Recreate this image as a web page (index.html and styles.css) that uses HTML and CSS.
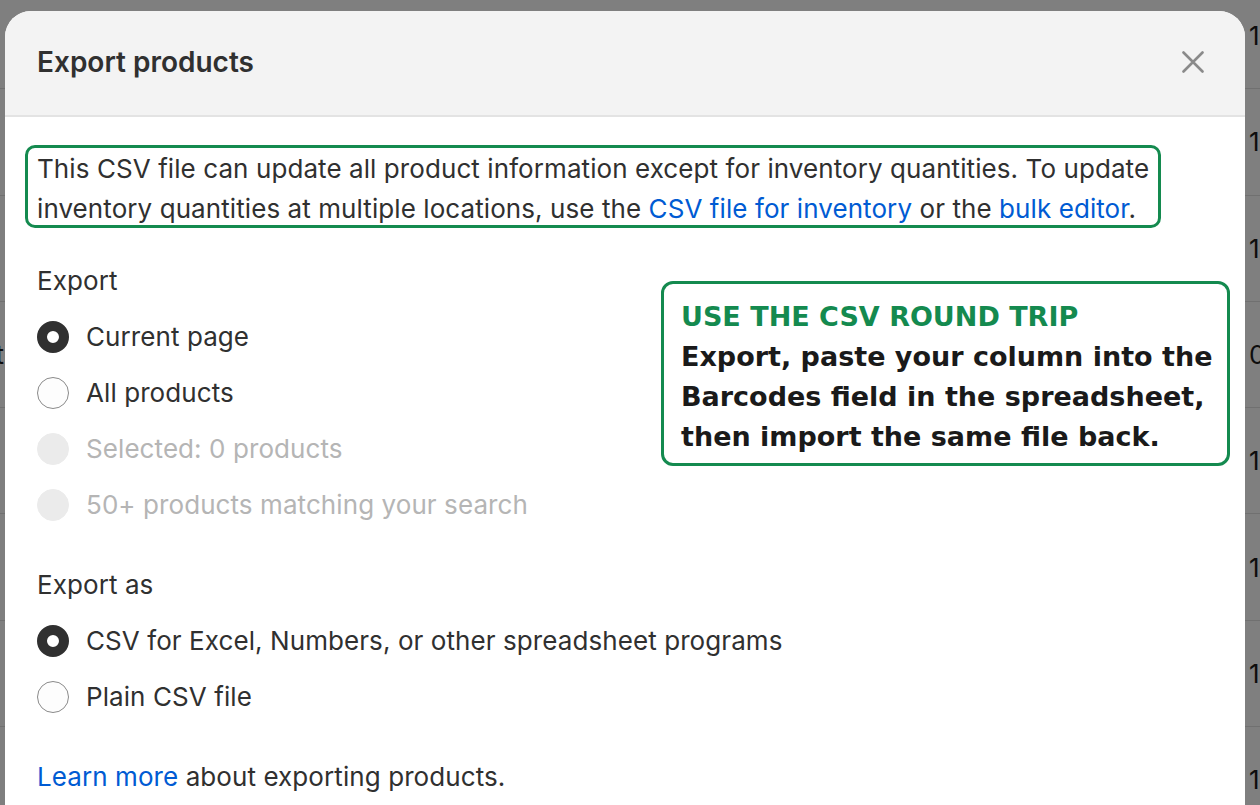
FILE: index.html
```html
<!DOCTYPE html>
<html lang="en">
<head>
<meta charset="utf-8">
<title>Export products</title>
<link rel="stylesheet" href="styles.css">
</head>
<body>
<div class="page">
  <div class="row"><span class="cell-left"></span><span class="cell-right">1</span></div>
  <div class="row"><span class="cell-left"></span><span class="cell-right">1</span></div>
  <div class="row"><span class="cell-left"></span><span class="cell-right">1</span></div>
  <div class="row"><span class="cell-left">Export</span><span class="cell-right">0</span></div>
  <div class="row"><span class="cell-left"></span><span class="cell-right">1</span></div>
  <div class="row"><span class="cell-left"></span><span class="cell-right">1</span></div>
  <div class="row"><span class="cell-left"></span><span class="cell-right">1</span></div>
  <div class="row"><span class="cell-left"></span><span class="cell-right">1</span></div>
</div>
<div class="backdrop"></div>

<div class="modal" role="dialog" aria-labelledby="modal-title">
  <header class="modal-header">
    <h2 id="modal-title" class="modal-title">Export products</h2>
    <button class="close-btn" aria-label="Close">
      <svg width="22" height="22" viewBox="0 0 22 22" aria-hidden="true">
        <path d="M1.5 1.5 L20.5 20.5 M20.5 1.5 L1.5 20.5" stroke="#8a8a8a" stroke-width="2.6" stroke-linecap="round" fill="none"/>
      </svg>
    </button>
  </header>

  <div class="modal-body">
    <p class="intro">This CSV file can update all product information except for inventory quantities. To update inventory quantities at multiple locations, use the <a href="#" class="link">CSV file for inventory</a> or the <a href="#" class="link">bulk editor</a>.</p>

    <fieldset class="group">
      <legend class="group-label">Export</legend>
      <label class="option"><span class="radio checked"></span><span class="option-text">Current page</span></label>
      <label class="option"><span class="radio"></span><span class="option-text">All products</span></label>
      <label class="option disabled"><span class="radio"></span><span class="option-text">Selected: 0 products</span></label>
      <label class="option disabled"><span class="radio"></span><span class="option-text">50+ products matching your search</span></label>
    </fieldset>

    <fieldset class="group">
      <legend class="group-label">Export as</legend>
      <label class="option"><span class="radio checked"></span><span class="option-text">CSV for Excel, Numbers, or other spreadsheet programs</span></label>
      <label class="option"><span class="radio"></span><span class="option-text">Plain CSV file</span></label>
    </fieldset>

    <p class="learn"><a href="#" class="link">Learn more</a> about exporting products.</p>
  </div>

  <div class="note-outline" aria-hidden="true"></div>
  <aside class="note">
    <div class="note-title">USE THE CSV ROUND TRIP</div>
    <div class="note-text">Export, paste your column into the Barcodes field in the spreadsheet, then import the same file back.</div>
  </aside>
</div>
</body>
</html>
```

FILE: styles.css
```css
* { box-sizing: border-box; }

html, body {
  margin: 0;
  padding: 0;
  width: 1260px;
  height: 805px;
  overflow: hidden;
}

body {
  font-family: Inter, "Noto Sans", "Liberation Sans", sans-serif;
  color: #303030;
  background: #ffffff;
  position: relative;
}

/* underlying page */
.page {
  margin-top: -17px;
}

.row {
  height: 106.3px;
  display: grid;
  grid-template-columns: 1249px 1fr;
  align-items: center;
  border-bottom: 1px solid #e0e0e0;
  font-size: 26px;
  color: #1a1a1a;
  white-space: nowrap;
  overflow: hidden;
}

.cell-left {
  overflow: hidden;
  direction: rtl;
  text-align: left;
  width: 4px;
}

.cell-right {
  overflow: hidden;
}

.backdrop {
  position: absolute;
  inset: 0;
  background: rgba(0, 0, 0, 0.5);
}

/* modal */
.modal {
  position: absolute;
  left: 5px;
  top: 11px;
  width: 1240px;
  height: 820px;
  background: #ffffff;
  border-radius: 26px 26px 0 0;
  overflow: hidden;
}

.modal-header {
  height: 106px;
  background: #f3f3f3;
  border-bottom: 2px solid #e3e3e3;
  display: flex;
  align-items: center;
  justify-content: space-between;
  padding: 0 32px 2px 32px;
}

.modal-title {
  margin: 0;
  font-size: 28px;
  font-weight: 600;
  color: #303030;
}

.close-btn {
  width: 40px;
  height: 40px;
  border: 0;
  background: transparent;
  padding: 0;
  display: flex;
  align-items: center;
  justify-content: center;
}

.modal-body {
  padding: 32px 32px 0 32px;
  font-size: 26px;
  line-height: 40px;
  letter-spacing: 0.08px;
}

.intro {
  margin: 0 0 32px 0;
}

.link {
  color: #005bd3;
  text-decoration: none;
}

.group {
  border: 0;
  margin: 0 0 40px 0;
  padding: 0;
  display: flex;
  flex-direction: column;
  gap: 16px;
}

.group-label {
  padding: 0;
  float: left;
  margin-bottom: 0;
  line-height: 40px;
}

.option {
  display: flex;
  align-items: center;
  gap: 17px;
  height: 40px;
}

.radio {
  width: 32px;
  height: 32px;
  border-radius: 50%;
  background: #fdfdfd;
  border: 1.5px solid #8a8a8a;
  flex: none;
}

.radio.checked {
  background: #ffffff;
  border: 10px solid #303030;
}

.option.disabled .radio {
  background: #ebebeb;
  border-color: #ebebeb;
}

.option.disabled .option-text {
  color: #b5b5b5;
}

.learn {
  margin: 0;
}

/* annotations */
.note-outline {
  position: absolute;
  left: 20px;
  top: 134px;
  width: 1136px;
  height: 83px;
  border: 3px solid #148a4f;
  border-radius: 10px;
}

.note {
  position: absolute;
  left: 656px;
  top: 270px;
  width: 569px;
  height: 185px;
  border: 3px solid #148a4f;
  border-radius: 12px;
  background: #ffffff;
  padding: 13px 10px 0 17px;
  font-family: "DejaVu Sans", "Liberation Sans", sans-serif;
  font-weight: bold;
  font-size: 27px;
  line-height: 40px;
  color: #1a1a1a;
}

.note-title {
  color: #148a4f;
}
```
